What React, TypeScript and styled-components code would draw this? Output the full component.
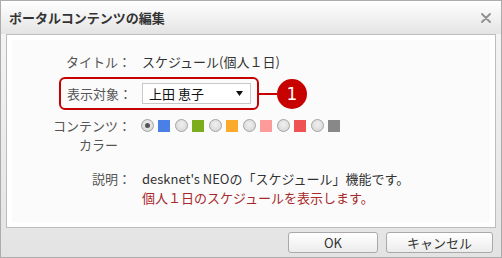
import * as React from 'react';
import styled, { createGlobalStyle } from 'styled-components';

const GlobalStyle = createGlobalStyle`
  html, body {
    margin: 0;
    padding: 0;
    background: #ffffff;
  }
  body {
    font-family: "Noto Sans CJK JP", "Noto Sans", sans-serif;
    font-size: 13px;
    color: #333333;
  }
`;

const Dialog = styled.div`
  width: 502px;
  height: 258px;
  box-sizing: border-box;
  border: 1px solid #acacac;
  display: flex;
  flex-direction: column;
  background: linear-gradient(#f6f6f6, #e3e3e3);
`;

const TitleBar = styled.div`
  height: 33px;
  flex: none;
  display: flex;
  align-items: center;
  justify-content: space-between;
  padding: 0 10px 0 8px;
  background: linear-gradient(#ffffff, #e4e4e4);
`;

const Title = styled.div`
  font-size: 13px;
  font-weight: bold;
  color: #333333;
  line-height: 16px;
`;

const CloseIcon = styled.svg`
  width: 10px;
  height: 10px;
  margin-top: 1px;
`;

const Panel = styled.div`
  margin: 0 5px;
  height: 194px;
  box-sizing: border-box;
  border: 1px solid #bdbdbd;
  background: #ffffff;
  padding: 5px;
  flex: none;
`;

const Inner = styled.div`
  height: 100%;
  box-sizing: border-box;
  background: #fbfbfb;
  padding-top: 12px;
`;

const Row = styled.div<{ $gap: number }>`
  display: flex;
  align-items: flex-start;
  margin-top: ${(p) => p.$gap}px;
  line-height: 19px;
`;

const Label = styled.div`
  width: 106px;
  text-align: right;
  color: #555555;
  flex: none;
`;

const Colon = styled.span`
  width: 13px;
  margin-right: 11px;
  color: #555555;
  flex: none;
  text-align: center;
`;

const Value = styled.div<{ $tone?: string }>`
  color: ${(p) => p.$tone || '#333333'};
`;

const Highlight = styled.div`
  margin-left: 47px;
  display: flex;
  align-items: center;
  border: 2px solid #c70000;
  border-radius: 6px;
  padding: 4px 6px;
`;

const InlineLabel = styled.span`
  color: #555555;
`;

const Select = styled.div`
  width: 109px;
  height: 21px;
  box-sizing: border-box;
  border: 1px solid #c9c9c9;
  background: #ffffff;
  display: flex;
  align-items: center;
  justify-content: space-between;
  padding: 0 7px 0 6px;
  color: #111111;
  margin-left: -1px;
`;

const Arrow = styled.svg`
  width: 7px;
  height: 5px;
`;

const Connector = styled.div`
  width: 18px;
  height: 2px;
  background: #c70000;
  align-self: center;
`;

const Badge = styled.div`
  width: 30px;
  height: 30px;
  border-radius: 50%;
  background: #c70000;
  color: #ffffff;
  font-family: "DejaVu Sans", sans-serif;
  font-size: 17px;
  line-height: 30px;
  text-align: center;
  align-self: center;
`;

const Palette = styled.div`
  display: flex;
  align-items: center;
  height: 19px;
  margin-left: -1px;
`;

const Radio = styled.span<{ $checked?: boolean }>`
  width: 13px;
  height: 13px;
  box-sizing: border-box;
  border-radius: 50%;
  border: 1px solid #a3a3a3;
  background: radial-gradient(circle at 50% 40%, #f0f0f0, #d2d2d2);
  display: flex;
  align-items: center;
  justify-content: center;
  margin-right: 4px;

  &::after {
    content: '';
    width: 5px;
    height: 5px;
    border-radius: 50%;
    background: ${(p) => (p.$checked ? '#555555' : 'transparent')};
  }
`;

const Swatch = styled.span<{ $color: string }>`
  width: 12px;
  height: 12px;
  background: ${(p) => p.$color};
  margin-right: 5px;
`;

const Footer = styled.div`
  flex: 1;
  display: flex;
  align-items: center;
  justify-content: flex-end;
  gap: 8px;
  padding-right: 8px;
`;

const Button = styled.button<{ $width: number }>`
  width: ${(p) => p.$width}px;
  height: 21px;
  box-sizing: border-box;
  border: 1px solid #a9a9a9;
  border-radius: 3px;
  background: linear-gradient(#ffffff, #ececec);
  font-family: "Noto Sans CJK JP", sans-serif;
  font-size: 13px;
  color: #333333;
  padding: 0;
  line-height: 19px;
`;

const swatches = ['#4a80e6', '#7cad1d', '#fbaa2b', '#fd9b9b', '#ef5252', '#888888'];

export default function App() {
  return (
    <>
      <GlobalStyle />
      <Dialog>
        <TitleBar>
          <Title>ポータルコンテンツの編集</Title>
          <CloseIcon viewBox="0 0 10 10">
            <path d="M1 1 L9 9 M9 1 L1 9" stroke="#8f8f8f" strokeWidth="1.8" strokeLinecap="round" />
          </CloseIcon>
        </TitleBar>
        <Panel>
          <Inner>
            <Row $gap={0}>
              <Label>タイトル</Label>
              <Colon>：</Colon>
              <Value>スケジュール(個人１日)</Value>
            </Row>
            <Row $gap={6}>
              <Highlight>
                <InlineLabel>表示対象</InlineLabel>
                <Colon>：</Colon>
                <Select>
                  <span>上田 恵子</span>
                  <Arrow viewBox="0 0 7 5">
                    <path d="M0 0 H7 L3.5 5 Z" fill="#111111" />
                  </Arrow>
                </Select>
              </Highlight>
              <Connector />
              <Badge>1</Badge>
            </Row>
            <Row $gap={6}>
              <Label>
                コンテンツ
                <br />
                カラー
              </Label>
              <Colon>：</Colon>
              <Palette>
                <Radio $checked />
                {swatches.map((c) => (
                  <React.Fragment key={c}>
                    <Swatch $color={c} />
                    {c !== '#888888' && <Radio />}
                  </React.Fragment>
                ))}
              </Palette>
            </Row>
            <Row $gap={15}>
              <Label>説明</Label>
              <Colon>：</Colon>
              <div>
                <Value>desknet's NEOの「スケジュール」機能です。</Value>
                <Value $tone="#a8282a">個人１日のスケジュールを表示します。</Value>
              </div>
            </Row>
          </Inner>
        </Panel>
        <Footer>
          <Button $width={90}>OK</Button>
          <Button $width={107}>キャンセル</Button>
        </Footer>
      </Dialog>
    </>
  );
}
